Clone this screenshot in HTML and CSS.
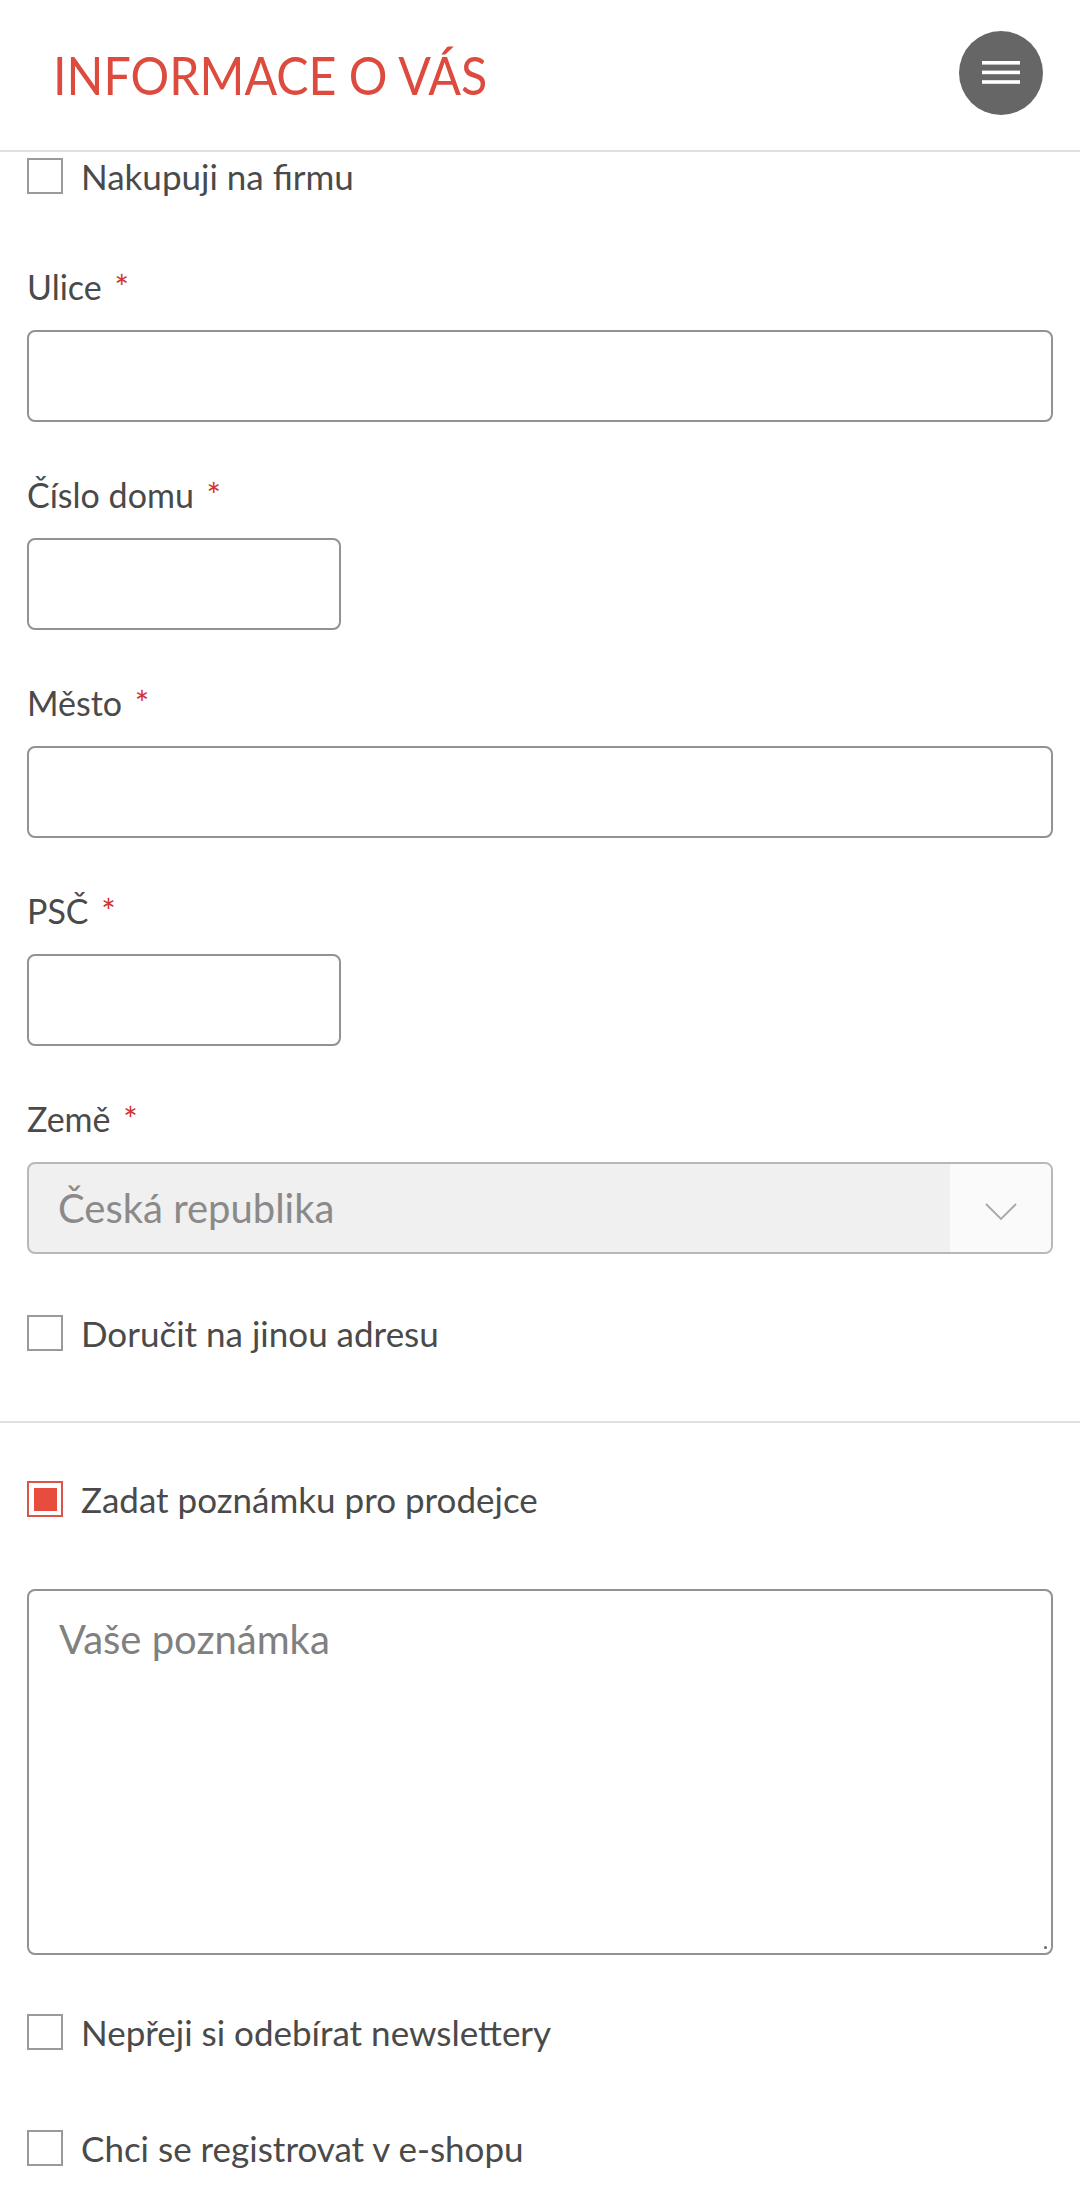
FILE: index.html
```
<!DOCTYPE html>
<html lang="cs">
<head>
<meta charset="utf-8">
<title>Informace o vás</title>
<link rel="stylesheet" href="styles.css">
</head>
<body>
<header class="topbar">
  <h1 class="title"><span class="title-text">INFORMACE O VÁS</span></h1>
  <button class="menu-btn" type="button" aria-label="Menu">
    <svg width="38" height="24" viewBox="0 0 38 24">
      <rect x="0" y="0" width="38" height="3.6" fill="#fff"/>
      <rect x="0" y="9.6" width="38" height="3.6" fill="#fff"/>
      <rect x="0" y="19.2" width="38" height="3.6" fill="#fff"/>
    </svg>
  </button>
</header>

<main class="form">
  <label class="check-row first">
    <span class="box"></span>
    <span class="check-text">Nakupuji na firmu</span>
  </label>

  <div class="field field-first">
    <div class="label">Ulice <span class="req">*</span></div>
    <div class="input wide"></div>
  </div>

  <div class="field">
    <div class="label">Číslo domu <span class="req">*</span></div>
    <div class="input short"></div>
  </div>

  <div class="field">
    <div class="label">Město <span class="req">*</span></div>
    <div class="input wide"></div>
  </div>

  <div class="field">
    <div class="label">PSČ <span class="req">*</span></div>
    <div class="input short"></div>
  </div>

  <div class="field">
    <div class="label">Země <span class="req">*</span></div>
    <div class="select">
      <div class="select-value">Česká republika</div>
      <div class="select-arrow">
        <svg width="32" height="18" viewBox="0 0 32 18">
          <polyline points="1,1 16,16 31,1" fill="none" stroke="#a8a8a8" stroke-width="1.8"/>
        </svg>
      </div>
    </div>
  </div>

  <label class="check-row after-select">
    <span class="box"></span>
    <span class="check-text">Doručit na jinou adresu</span>
  </label>

  <div class="separator"></div>

  <label class="check-row after-sep">
    <span class="box checked"><span class="box-fill"></span></span>
    <span class="check-text">Zadat poznámku pro prodejce</span>
  </label>

  <div class="textarea">
    <span class="placeholder">Vaše poznámka</span>
    <span class="grip"></span>
  </div>

  <label class="check-row after-textarea">
    <span class="box"></span>
    <span class="check-text">Nepřeji si odebírat newslettery</span>
  </label>

  <label class="check-row last">
    <span class="box"></span>
    <span class="check-text">Chci se registrovat v e-shopu</span>
  </label>
</main>
</body>
</html>
```

FILE: styles.css
```
* {
  box-sizing: border-box;
}

html, body {
  margin: 0;
  padding: 0;
  background: #fff;
}

body {
  width: 1080px;
  font-family: Lato, "Open Sans", "Liberation Sans", sans-serif;
  color: #4a4a4a;
}

.topbar {
  height: 152px;
  display: flex;
  align-items: center;
  justify-content: space-between;
  padding: 0 37px 0 53px;
  border-bottom: 2px solid #e0e0e0;
}

.title {
  margin: 0;
  font-weight: 400;
  font-size: 52px;
  line-height: 60px;
  color: #dc4b3e;
  white-space: nowrap;
}

.title-text {
  display: inline-block;
  transform: scaleX(0.93);
  transform-origin: left center;
}

.menu-btn {
  width: 84px;
  height: 84px;
  border-radius: 50%;
  border: none;
  background: #666;
  display: flex;
  align-items: center;
  justify-content: center;
  padding: 0;
  margin-top: -4px;
}

.menu-btn svg {
  display: block;
}

.form {
  padding: 0 27px 40px;
}

.check-row {
  display: flex;
  align-items: center;
  gap: 18px;
  height: 36px;
  font-size: 35px;
  line-height: 36px;
  color: #4a4a4a;
}

.check-row.first {
  margin-top: 6px;
}

.check-row.after-select {
  margin-top: 61px;
}

.check-row.after-sep {
  margin-top: 58px;
}

.check-row.after-textarea {
  margin-top: 59px;
}

.check-row.last {
  margin-top: 80px;
}

.box {
  flex: none;
  width: 36px;
  height: 36px;
  border: 2px solid #9a9a9a;
  background: #fff;
  display: flex;
  align-items: center;
  justify-content: center;
}

.box.checked {
  border-color: #d9554a;
}

.box-fill {
  width: 23px;
  height: 23px;
  background: #e84c3d;
}

.check-text {
  white-space: nowrap;
}

.field {
  margin-top: 53px;
}

.field.field-first {
  margin-top: 73px;
}

.label {
  font-size: 34px;
  line-height: 40px;
  height: 40px;
  margin-bottom: 23px;
  color: #4a4a4a;
}

.req {
  color: #d0352f;
  margin-left: 4px;
  font-size: 34px;
}

.input {
  height: 92px;
  border: 2px solid #929292;
  border-radius: 8px;
  background: #fff;
}

.input.wide {
  width: 100%;
}

.input.short {
  width: 314px;
}

.select {
  height: 92px;
  border: 2px solid #b8b8b8;
  border-radius: 8px;
  background: #f0f0f0;
  display: flex;
  overflow: hidden;
}

.select-value {
  flex: 1;
  display: flex;
  align-items: center;
  padding-left: 29px;
  font-size: 40px;
  color: #8a8a8a;
}

.select-arrow {
  flex: none;
  width: 101px;
  background: #fafafa;
  display: flex;
  align-items: center;
  justify-content: center;
  padding-top: 8px;
}

.separator {
  height: 2px;
  background: #e0e0e0;
  margin: 70px -27px 0;
}

.textarea {
  position: relative;
  margin-top: 72px;
  height: 366px;
  border: 2px solid #929292;
  border-radius: 8px;
  padding: 24px 30px;
  background: #fff;
}

.placeholder {
  display: block;
  font-size: 40px;
  line-height: 48px;
  color: #808080;
}

.grip {
  position: absolute;
  right: 4px;
  bottom: 4px;
  width: 3px;
  height: 3px;
  border-radius: 50%;
  background: #666;
}
```
